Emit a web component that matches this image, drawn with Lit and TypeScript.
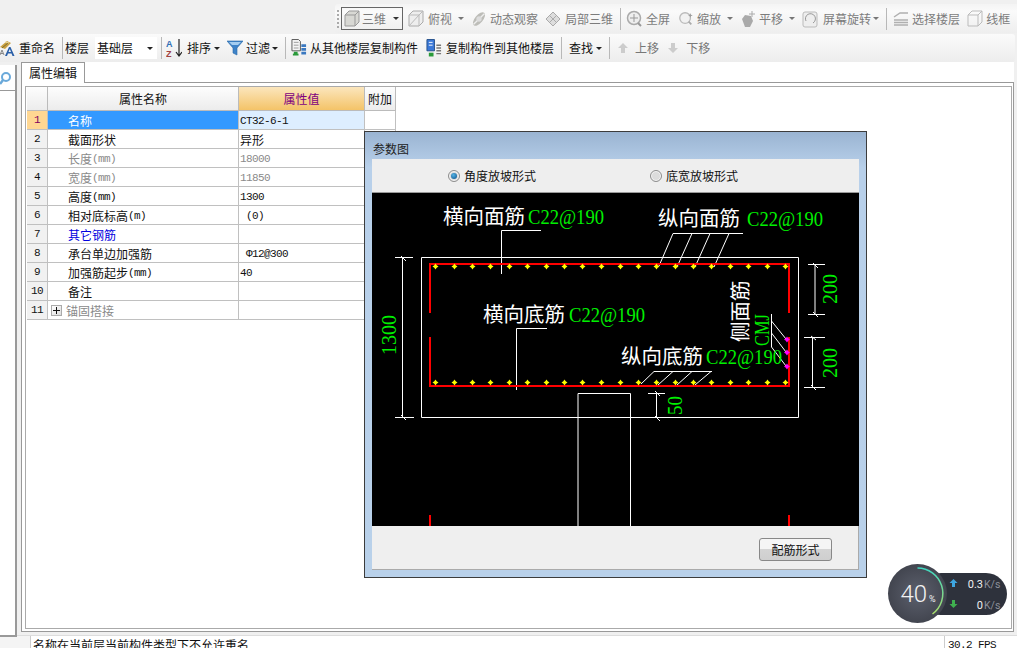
import { LitElement, html, css, svg } from "lit";
import { customElement } from "lit/decorators.js";

const icons: Record<string, any> = {
  cube: html`<svg width="16" height="18" viewBox="0 0 16 18"><path d="M1 5l4-4h10v11l-4 4H1z" fill="#d8d8d4" stroke="#999"/><path d="M1 5h10v11M11 5l4-4" fill="none" stroke="#999"/></svg>`,
  cubeline: html`<svg width="16" height="18" viewBox="0 0 16 18"><path d="M1 5l4-4h10v11l-4 4H1z" fill="#eee" stroke="#aaa"/><path d="M1 5h10v11M11 5l4-4M1 16l10-11" fill="none" stroke="#bbb"/></svg>`,
  orbit: html`<svg width="18" height="18" viewBox="0 0 18 18"><ellipse cx="9" cy="9" rx="4.500" ry="9" transform="rotate(40 9 9)" fill="#bdbdb8"/><path d="M3 15L15 3" stroke="#eee" stroke-width="1.500"/><circle cx="9" cy="9" r="3" fill="#ddd"/></svg>`,
  part: html`<svg width="16" height="16" viewBox="0 0 16 16"><path d="M1 8l7-7 7 7-7 7z" fill="#ddd" stroke="#aaa"/><path d="M4.500 4.500l7 7M8 8l-3 3M11 5l-3 3" stroke="#aaa" fill="none"/></svg>`,
  full: html`<svg width="16" height="18" viewBox="0 0 16 18"><circle cx="8" cy="8" r="6.500" fill="#eee" stroke="#aaa" stroke-width="1.500"/><path d="M8 4v8M4 8h8" stroke="#999"/><path d="M12 13l3 3" stroke="#999" stroke-width="2"/></svg>`,
  zoom: html`<svg width="18" height="18" viewBox="0 0 18 18"><circle cx="8" cy="8" r="6" fill="#f2f2f2" stroke="#bbb" stroke-width="1.500"/><path d="M12 12l3 3" stroke="#aaa" stroke-width="2"/><path d="M14 3v4M12 5h4" stroke="#999"/></svg>`,
  pan: html`<svg width="16" height="18" viewBox="0 0 16 18"><path d="M2 9l3-4 6 1 2 5-3 6H5z" fill="#aaa"/><path d="M12 1v6M9 4h6" stroke="#aaa"/></svg>`,
  rotate: html`<svg width="16" height="18" viewBox="0 0 16 18"><rect x="1" y="2" width="14" height="15" rx="2" fill="#eee" stroke="#bbb"/><path d="M4 11a5 5 0 1 1 7 2" fill="none" stroke="#999"/></svg>`,
  floors: html`<svg width="16" height="16" viewBox="0 0 16 16"><path d="M1 6l6-4h8M1 9h14M1 11.500h14M1 14h14" fill="none" stroke="#b0b0b0" stroke-width="1.500"/></svg>`,
  wire: html`<svg width="16" height="18" viewBox="0 0 16 18"><path d="M1 5l4-4h10v11l-4 4H1zM1 5h10v11M11 5l4-4" fill="none" stroke="#bbb"/></svg>`,
  rename: html`<svg width="16" height="18" viewBox="0 0 16 18"><path d="M0 8l7-6 4 2-6 6z" fill="#c9a040"/><path d="M2 9l6-5" stroke="#7a6a30"/><path d="M5 3l4 1" stroke="#e8d8a0"/><path d="M0 16l2-5 2 5M1 14.500h2" fill="none" stroke="#888"/><path d="M5 17l4-9h1.500l4 9h-2l-1-2.500H8L7 17zM8.500 13h2.500l-1.200-3z" fill="#2a5fa8" fill-rule="evenodd"/></svg>`,
  sort: html`<svg width="16" height="20" viewBox="0 0 16 20"><text x="0" y="9" class="az" fill="#2f6fb5" font-size="9" font-weight="700">A</text><text x="0" y="19" class="az" fill="#a04040" font-size="9" font-weight="700">Z</text><path d="M13 1v16M10 14l3 4 3-4" fill="none" stroke="#222" stroke-width="1.200"/></svg>`,
  filter: html`<svg width="16" height="16" viewBox="0 0 16 16"><path d="M0 1h16L10 8v7l-4-2V8z" fill="#3f83c8" stroke="#2a6aa8" stroke-width=".6"/><path d="M2 2h12l-3 3H5z" fill="#a5cdf0"/></svg>`,
  copyfrom: html`<svg width="17" height="20" viewBox="0 0 17 20"><path d="M1 1h7l2 2v10H1z" fill="#f4f4f4" stroke="#555"/><path d="M3 4h5M3 7h5M3 10h5" stroke="#999"/><path d="M3 14h4v3H3z" fill="#2a9a3a"/><path d="M2 17h6" stroke="#2a9a3a" stroke-width="2"/><path d="M11 6h5v3h-5zM11 10h5v3h-5zM11 14h5v3h-5z" fill="#3a78c0"/></svg>`,
  copyto: html`<svg width="17" height="20" viewBox="0 0 17 20"><path d="M1 1h8v12H1z" fill="#3a78d8" stroke="#25508a"/><path d="M3 4h4M3 7h4" stroke="#fff"/><path d="M3 15h5v4H3z" fill="#2a9a3a"/><path d="M11 7h5M11 10h5M11 13h5M11 16h5" stroke="#777" stroke-width="1.500"/></svg>`,
  up: html`<svg width="16" height="12" viewBox="0 0 16 12"><path d="M8 1l5 5h-3v5H6V6H3z" fill="#ccc"/></svg>`,
  down: html`<svg width="16" height="12" viewBox="0 0 16 12"><path d="M8 11l5-5h-3V1H6v5H3z" fill="#ccc"/></svg>`,
};

type Tool = { i?: string; l?: string; a?: boolean; m: number; g?: number; am?: number; sep?: boolean };

const top: Tool[] = [
  { i: "cubeline", l: "俯视", a: true, m: 5, g: 4, am: 6 },
  { i: "orbit", l: "动态观察", m: 7, g: 3 },
  { i: "part", l: "局部三维", m: 7, g: 4 },
  { sep: true, m: 7 },
  { i: "full", l: "全屏", m: 5, g: 4 },
  { i: "zoom", l: "缩放", a: true, m: 8, g: 3, am: 6 },
  { i: "pan", l: "平移", a: true, m: 7, g: 3, am: 6 },
  { i: "rotate", l: "屏幕旋转", a: true, m: 7, g: 5, am: 2 },
  { sep: true, m: 7 },
  { i: "floors", l: "选择楼层", m: 6, g: 3 },
  { i: "wire", l: "线框", m: 7, g: 3 },
];

const sec1: Tool[] = [
  { sep: true, m: 4 },
  { i: "sort", l: "排序", a: true, m: 4, g: 5, am: 3 },
  { i: "filter", l: "过滤", a: true, m: 7, g: 3, am: 2 },
  { sep: true, m: 7 },
  { i: "copyfrom", l: "从其他楼层复制构件", m: 5, g: 3 },
  { i: "copyto", l: "复制构件到其他楼层", m: 8, g: 4 },
  { sep: true, m: 7 },
  { l: "查找", a: true, m: 7, am: 3 },
  { sep: true, m: 7 },
];

const rows: { n: number; name: string; unit?: string; val?: string; cls?: string; mono?: boolean; plus?: boolean }[] = [
  { n: 1, name: "名称", val: "CT32-6-1", cls: "sel", mono: true },
  { n: 2, name: "截面形状", val: "异形" },
  { n: 3, name: "长度", unit: "(mm)", val: "18000", cls: "dim", mono: true },
  { n: 4, name: "宽度", unit: "(mm)", val: "11850", cls: "dim", mono: true },
  { n: 5, name: "高度", unit: "(mm)", val: "1300", mono: true },
  { n: 6, name: "相对底标高", unit: "(m)", val: " (0)", mono: true },
  { n: 7, name: "其它钢筋", val: "", cls: "link" },
  { n: 8, name: "承台单边加强筋", val: " Φ12@300", mono: true },
  { n: 9, name: "加强筋起步", unit: "(mm)", val: "40", mono: true },
  { n: 10, name: "备注", val: "" },
  { n: 11, name: "锚固搭接", val: "", cls: "dim", plus: true },
];

const topDots = [435, 454, 472, 490, 509, 527, 546, 564, 582, 601, 620, 638, 656, 675, 693, 711, 730, 748, 767, 785];
const lines: number[][] = [
  [421.5, 257.5, 798.5, 257.5], [798.5, 257.5, 798.5, 417.5], [798.5, 417.5, 421.5, 417.5], [421.5, 417.5, 421.5, 257.5],
  [402.5, 257, 402.5, 418], [395, 257.5, 413, 257.5], [395, 417.5, 414, 417.5], [401, 256, 406, 261], [401, 415, 406, 420],
  [501.5, 230.5, 541, 230.5], [501.5, 230.5, 501.5, 274],
  [673, 233.5, 743, 233.5], [673, 233.5, 659, 266], [692, 233.5, 677, 267], [710, 233.5, 695, 267], [729, 233.5, 714, 267],
  [516.5, 328.5, 547, 328.5], [516.5, 328.5, 516.5, 390],
  [654, 371.5, 712, 371.5], [654, 371.5, 641, 384], [673, 371.5, 658, 385], [692, 371.5, 677, 385], [711, 371.5, 695, 385],
  [771.5, 314, 771.5, 347], [771.5, 321, 786, 339], [771.5, 333, 786, 352], [771.5, 347, 786, 366],
  [578, 526, 578, 393.5], [578, 393.5, 630.5, 393.5], [630.5, 393.5, 630.5, 526],
  [656.5, 393, 656.5, 418], [648, 393.5, 665, 393.5], [655, 391, 660, 396], [655, 416, 660, 421],
  [815, 264, 815, 314], [808, 264.5, 825, 264.5], [808, 314.5, 825, 314.5], [813, 263, 818, 268], [813, 312, 818, 317],
  [812.5, 337, 812.5, 388], [804, 337.5, 825, 337.5], [804, 387.5, 825, 387.5], [811, 336, 816, 340], [811, 385, 816, 390],
];
const reds: number[][] = [
  [429, 264, 790, 264], [430, 263, 430, 313], [789, 263, 789, 313],
  [430, 337, 430, 387], [789, 337, 789, 387], [429, 386, 790, 386],
  [430, 515, 430, 526], [789, 515, 789, 526],
];
const star = (x: number, y: number, c: string) =>
  svg`<path d="M${x} ${y - 3}L${x + 1.2} ${y - 1.2}L${x + 3} ${y}L${x + 1.2} ${y + 1.2}L${x} ${y + 3}L${x - 1.2} ${y + 1.2}L${x - 3} ${y}L${x - 1.2} ${y - 1.2}z" fill=${c}/>`;
const cjk = (x: number, y: number, t: string) => svg`<text x=${x} y=${y} class="cad">${t}</text>`;
const num = (x: number, y: number, t: string, len: number, size = 22, rot = 0) =>
  svg`<text class="num" font-size=${size} textLength=${len} lengthAdjust="spacingAndGlyphs" transform="translate(${x} ${y}) rotate(${rot})">${t}</text>`;

@customElement("app-root")
export class AppRoot extends LitElement {
  static styles = css`
    :host { display: block; width: 1017px; height: 648px; position: relative; overflow: hidden; background: #f0f0f0;
      font: 12px/16px "Noto Sans CJK SC", "Liberation Sans", sans-serif; color: #111; }
    .az { font-family: "Liberation Sans", sans-serif; }
    .tb1 { height: 29px; margin: 4px 0 1px 335px; display: flex; align-items: center; color: #7c7c7c;
      background: linear-gradient(#f4f4f4, #fafafa 25%, #eeeeee); border-radius: 3px 0 0 3px; }
    .tb2 { height: 28px; width: 1015px; display: flex; align-items: center; background: linear-gradient(#fbfbfb, #ededed); border-radius: 0 3px 3px 0; }
    .tool { display: flex; align-items: center; flex: none; white-space: nowrap; }
    .ic { display: flex; width: 16px; justify-content: center; flex: none; }
    .ar { width: 0; height: 0; border: 3px solid transparent; border-top: 3px solid #222; border-bottom: 0; flex: none; }
    .tb1 .ar { border-top-color: #777; }
    .sep { width: 1px; height: 22px; background: #b8b8b8; flex: none; }
    .grip { width: 4px; height: 20px; margin-left: 1px; flex: none; background: radial-gradient(circle, #aaa 1.200px, transparent 1.500px) 0 0/4px 4px; }
    .btn3d { margin-left: 1px; width: 62px; height: 23px; box-sizing: border-box; border: 1px solid #666; display: flex; align-items: center; padding-left: 2px; flex: none; }
    .btn3d .lb { margin-left: 2px; }
    .btn3d .ar { margin-left: 7px; border-top-color: #333; }
    .disabled { display: flex; color: #777; }
    .combo { margin-left: 6px; width: 62px; height: 22px; background: #fff; display: flex; align-items: center; justify-content: space-between; padding: 0 4px 0 2px; box-sizing: border-box; flex: none; }
    .main { height: 573px; display: flex; }
    .left { width: 15px; height: 570px; margin-top: 3px; flex: none; background: #fff; border-right: 2px solid #999; border-bottom: 2px solid #999; }
    .lhead { height: 25px; border-bottom: 1px solid #999; display: flex; align-items: center; }
    .right { margin-left: 4px; width: 993px; height: 570px; display: flex; flex-direction: column; background: #fff; }
    .tabs { height: 20px; flex: none; }
    .tab { display: block; width: 62px; height: 20px; border: 1px solid #999; border-bottom: 0; background: #fff; text-align: center; line-height: 20px; color: #111; position: relative; z-index: 1; }
    .pane { height: 550px; flex: none; box-sizing: border-box; border: 1px solid #999; padding: 3px 1px 2px 3px; }
    .inner { height: 543px; box-sizing: border-box; border: 1px solid #aaa; width: 987px; padding: 0 0 0 1px; background: #fff; }
    .grid { display: grid; grid-template-columns: 21px 191px 126px 31px; width: 369px; grid-auto-rows: 19px; grid-template-rows: 24px; }
    .c { border-right: 1px solid #c0c0c0; border-bottom: 1px solid #c0c0c0; box-sizing: border-box; display: flex; align-items: center; overflow: hidden; padding-top: 1px; }
    .h { background: linear-gradient(#fdfdfd, #ececec); justify-content: center; border-color: #bbb; padding-top: 0; }
    .hv { background: linear-gradient(#fbe6bd, #f4c368); color: #800080; }
    .n { background: #f1f1f1; justify-content: center; font-family: "Liberation Mono", monospace; font-size: 11px; letter-spacing: -.6px; padding-top: 0; }
    .n.on { background: #ffd792; color: #800060; }
    .nm { padding-left: 20px; white-space: nowrap; }
    .nm.sel { background: #3399ff; color: #fff; }
    .v { padding-left: 1px; }
    .v.sel { background: #ddeeff; }
    .dim { color: #8a8a8a; }
    .link { color: #0000e0; }
    .u, .m { font: 11px/16px "Liberation Mono", monospace; letter-spacing: -.6px; white-space: pre; }
    .plus { width: 11px; height: 11px; border: 1px solid #aaa; background: linear-gradient(135deg, #fff, #ddd); margin: 0 4px 0 -17px; position: relative; flex: none; box-sizing: border-box; }
    .plus::before { content: ""; position: absolute; left: 1px; right: 1px; top: 4px; height: 1px; background: #111; }
    .plus::after { content: ""; position: absolute; top: 1px; bottom: 1px; left: 4px; width: 1px; background: #111; }
    .status { height: 13px; box-sizing: border-box; border-top: 1px solid #ddd; display: flex; overflow: hidden; background: #f4f4f4; }
    .st { line-height: 16px; padding-top: 1px; white-space: nowrap; overflow: hidden; }
    .s0 { width: 30px; border-right: 1px solid #ccc; flex: none; }
    .s1 { width: 914px; padding-left: 2px; border-right: 1px solid #ccc; flex: none; background: #fff; box-sizing: border-box; }
    .s2 { padding-left: 3px; font: 11px/16px "Liberation Mono", monospace; letter-spacing: -.6px; background: #fff; flex: 1; }
    .dialog { position: absolute; left: 364px; top: 131px; width: 503px; height: 447px; box-sizing: border-box; border: 1px solid #3c3c3c;
      padding: 0 7px 7px 7px; background: linear-gradient(#9ab4d2, #b8d0ea 8%, #b9d1ea); display: flex; flex-direction: column; }
    .title { height: 27px; line-height: 33px; padding-left: 1px; flex: none; color: #222; }
    .client { flex: 1; display: flex; flex-direction: column; width: 487px; }
    .radios { height: 34px; flex: none; box-sizing: border-box; background: #eeeeee; border-bottom: 1px solid #999; display: flex; align-items: center; padding: 0 0 0 76px; }
    .radio { display: flex; align-items: center; width: 202px; gap: 4px; flex: none; }
    .dot { width: 12px; height: 12px; border-radius: 50%; box-sizing: border-box; border: 1px solid #8e8e8e; background: #dcdcdc; box-shadow: inset 0 0 0 1px #f6f6f6; display: flex; align-items: center; justify-content: center; flex: none; }
    .dot.on::after { content: ""; width: 6px; height: 6px; border-radius: 50%; background: radial-gradient(circle at 40% 35%, #55b4e6, #0b4f88); }
    .cadsvg { display: block; flex: none; background: #000; }
    .cad { fill: #fff; font: 20.500px "Noto Sans CJK SC", sans-serif; }
    .num { fill: #00f000; font-family: "Liberation Serif", serif; }
    .foot { flex: 1; background: #efefef; border-bottom: 1px solid #aaa; border-right: 1px solid #aaa; display: flex; justify-content: flex-end; align-items: flex-start; padding: 12px 26px 0 0; }
    .push { width: 73px; height: 23px; box-sizing: border-box; border: 1px solid #888; border-radius: 3px; background: linear-gradient(#f5f5f5 50%, #d4d4d4 50%, #cfcfcf); text-align: center; line-height: 21px; color: #111; }
    .speed { position: absolute; left: 886px; top: 562px; display: block; }
    .sp { font-family: Roboto, "Liberation Sans", sans-serif; }
  `;

  private tool(t: Tool) {
    if (t.sep) return html`<span class="sep" style="margin-left:${t.m}px"></span>`;
    return html`<span class="tool" style="margin-left:${t.m}px">
      ${t.i ? html`<span class="ic" style="margin-right:${t.g ?? 0}px">${icons[t.i]}</span>` : ""}
      ${t.l ? html`<span>${t.l}</span>` : ""}
      ${t.a ? html`<span class="ar" style="margin-left:${t.am ?? 3}px"></span>` : ""}
    </span>`;
  }

  render() {
    return html`
      <div class="tb1">
        <span class="grip"></span>
        <span class="btn3d"><span class="ic">${icons.cube}</span><span class="lb">三维</span><span class="ar"></span></span>
        ${top.map((t) => this.tool(t))}
      </div>
      <div class="tb2">
        ${this.tool({ i: "rename", l: "重命名", m: 0, g: 3 })}
        ${this.tool({ sep: true, m: 7 })}
        ${this.tool({ l: "楼层", m: 2 })}
        <span class="combo"><span>基础层</span><span class="ar"></span></span>
        ${sec1.map((t) => this.tool(t))}
        <span class="disabled">
          ${this.tool({ i: "up", l: "上移", m: 5, g: 4 })}
          ${this.tool({ i: "down", l: "下移", m: 6, g: 5 })}
        </span>
      </div>
      <div class="main">
        <div class="left">
          <div class="lhead">
            <svg width="15" height="16" viewBox="0 0 15 16"><circle cx="6" cy="7" r="4" fill="none" stroke="#6aa9da" stroke-width="2"/><path d="M3 10l-3 4" stroke="#6aa9da" stroke-width="2.500"/></svg>
          </div>
        </div>
        <div class="right">
          <div class="tabs"><span class="tab">属性编辑</span></div>
          <div class="pane">
            <div class="inner">
              <div class="grid">
                <div class="c h"></div>
                <div class="c h">属性名称</div>
                <div class="c h hv">属性值</div>
                <div class="c h">附加</div>
                ${rows.map(
                  (r) => html`
                    <div class="c n ${r.n === 1 ? "on" : ""}">${r.n}</div>
                    <div class="c nm ${r.cls ?? ""}">${r.plus ? html`<span class="plus"></span>` : ""}${r.name}${r.unit ? html`<span class="u">${r.unit}</span>` : ""}</div>
                    <div class="c v ${r.cls === "sel" ? "sel" : r.cls === "dim" ? "dim" : ""}">${r.mono ? html`<span class="m">${r.val}</span>` : r.val}</div>
                    <div class="c"></div>
                  `
                )}
              </div>
            </div>
          </div>
        </div>
      </div>
      <div class="status">
        <span class="st s0"></span>
        <span class="st s1">名称在当前层当前构件类型下不允许重名</span>
        <span class="st s2">30.2 FPS</span>
      </div>

      <div class="dialog">
        <div class="title">参数图</div>
        <div class="client">
          <div class="radios">
            <span class="radio"><span class="dot on"></span>角度放坡形式</span>
            <span class="radio"><span class="dot"></span>底宽放坡形式</span>
          </div>
          <svg class="cadsvg" width="487" height="333" viewBox="372 193 487 333">
            ${lines.map((l) => svg`<line x1=${l[0]} y1=${l[1]} x2=${l[2]} y2=${l[3]} stroke="#fff" stroke-width="1"/>`)}
            ${reds.map((l) => svg`<line x1=${l[0]} y1=${l[1]} x2=${l[2]} y2=${l[3]} stroke="#f00" stroke-width="2"/>`)}
            ${topDots.map((x) => star(x + 0.5, 266.5, "#ff0"))}
            ${topDots.map((x) => star(x + 0.5, 382.5, "#ff0"))}
            ${[339.5, 352.5, 366.5].map((y) => star(787, y, "#f0f"))}
            ${cjk(443, 224, "横向面筋")}
            ${cjk(658, 226, "纵向面筋")}
            ${cjk(483, 322, "横向底筋")}
            ${cjk(621, 364, "纵向底筋")}
            <text class="cad" transform="translate(748 342) rotate(-90)">侧面筋</text>
            ${num(528, 224, "C22@190", 76)}
            ${num(747, 226, "C22@190", 76)}
            ${num(569, 322, "C22@190", 76)}
            ${num(706, 364, "C22@190", 76)}
            ${num(396, 355, "1300", 40, 22, -90)}
            ${num(837, 304, "200", 30, 22, -90)}
            ${num(837, 378, "200", 30, 22, -90)}
            ${num(682, 415, "50", 19, 22, -90)}
            ${num(769, 346, "CMJ", 32, 21, -90)}
          </svg>
          <div class="foot"><span class="push">配筋形式</span></div>
        </div>
      </div>

      <svg class="speed" width="124" height="64" viewBox="886 562 124 64">
        <defs>
          <linearGradient id="arc" x1="0" y1="0" x2="0" y2="1"><stop offset="0" stop-color="#3fd6c0"/><stop offset="1" stop-color="#a9dc6a"/></linearGradient>
          <radialGradient id="disc"><stop offset="0" stop-color="#5c606d"/><stop offset="1" stop-color="#42454f"/></radialGradient>
        </defs>
        <rect x="920" y="573" width="87" height="42" rx="21" fill="#2e323c"/>
        <circle cx="917.500" cy="593.500" r="29.500" fill="url(#disc)"/>
        <path d="M917.500 568A25.500 25.500 0 0 1 932.500 614" fill="none" stroke="url(#arc)" stroke-width="1.500"/>
        <text class="sp" x="900.500" y="602" font-size="24" font-weight="300" fill="#f2f2f2">40</text>
        <text class="sp" x="929" y="602" font-size="9" fill="#f2f2f2">%</text>
        <path d="M953.500 579l4 4h-2.500v4h-3v-4h-2.500z" fill="#3ea6e0"/>
        <path d="M953.500 608l4-4h-2.500v-4h-3v4h-2.500z" fill="#3fb04f"/>
        <text class="sp" x="983" y="588" text-anchor="end" font-size="11" fill="#f0f0f0">0.3</text>
        <text class="sp" x="984" y="588" font-size="10.500" fill="#8d919b">K/s</text>
        <text class="sp" x="983" y="609" text-anchor="end" font-size="11" fill="#f0f0f0">0</text>
        <text class="sp" x="984" y="609" font-size="10.500" fill="#8d919b">K/s</text>
      </svg>
    `;
  }
}
